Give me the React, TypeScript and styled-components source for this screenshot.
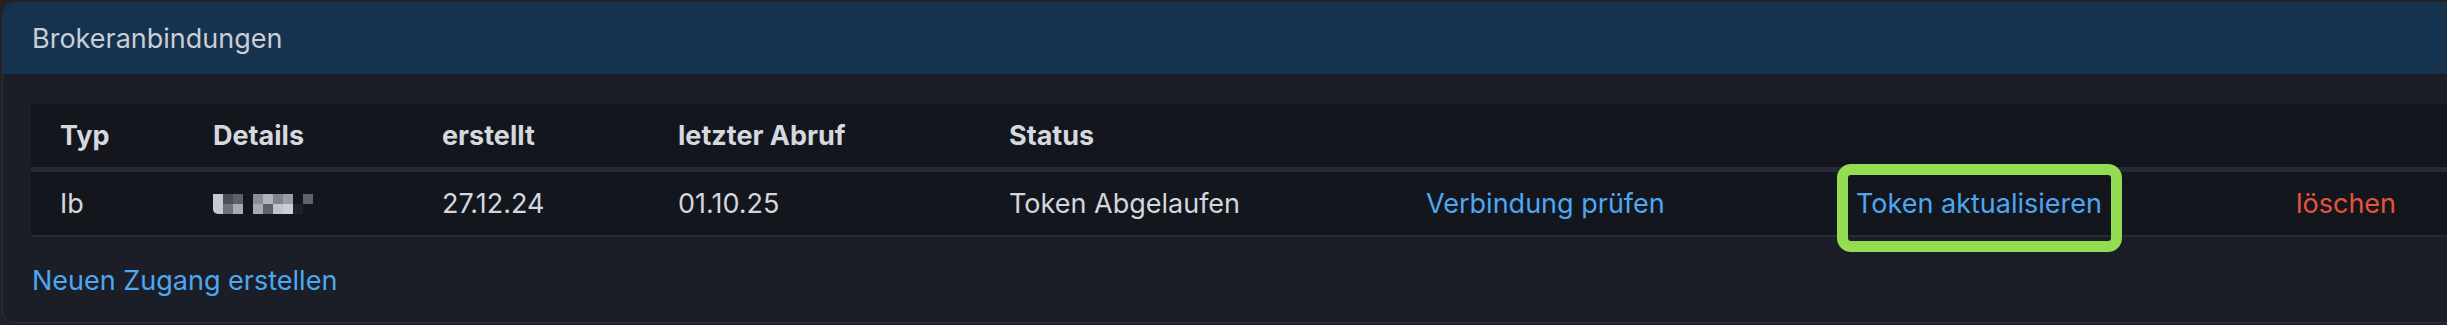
import React from 'react';
import styled, { createGlobalStyle } from 'styled-components';

const GlobalStyle = createGlobalStyle`
  html, body {
    margin: 0;
    padding: 0;
    background: #1f2229;
    overflow: hidden;
  }
  body {
    font-family: Inter, "Liberation Sans", sans-serif;
    -webkit-font-smoothing: antialiased;
  }
`;

const Page = styled.div`
  padding: 2px 0 0 2px;
  width: 2500px;
`;

const Panel = styled.section`
  background: #1b1e26;
  border: 1px solid #2b2f39;
  border-radius: 12px;
  overflow: hidden;
  height: 321px;
  box-sizing: border-box;
`;

const PanelHeader = styled.header`
  background: #15324f;
  height: 71px;
  display: flex;
  align-items: center;
  padding-left: 29px;
`;

const Title = styled.h2`
  margin: 0;
  font-size: 27px;
  font-weight: 400;
  color: #c9ced6;
`;

const PanelBody = styled.div`
  padding: 30px 0 0 28px;
`;

const Table = styled.table`
  width: 100%;
  border-collapse: separate;
  border-spacing: 0;
  table-layout: fixed;
`;

const Col = styled.col<{ $w?: number }>`
  width: ${(p) => (p.$w ? `${p.$w}px` : 'auto')};
`;

const Th = styled.th`
  height: 63px;
  box-sizing: content-box;
  background: #13161d;
  border-bottom: 5px solid #262a33;
  text-align: left;
  padding: 0 0 0 29px;
  font-size: 27px;
  font-weight: 700;
  color: #d5d8de;
`;

const Td = styled.td`
  position: relative;
  height: 63px;
  background: #13161d;
  border-bottom: 2px solid #262a33;
  padding: 0 0 0 29px;
  font-size: 27px;
  color: #d4d6dc;
  white-space: nowrap;
`;

const Link = styled.a<{ $danger?: boolean }>`
  color: ${(p) => (p.$danger ? '#e5533b' : '#4ea7f0')};
  text-decoration: none;
  cursor: pointer;
`;

const Highlight = styled.div`
  position: absolute;
  left: 10px;
  top: -8px;
  width: 285px;
  height: 88px;
  border: 11px solid #93dc53;
  border-radius: 14px;
  box-sizing: border-box;
  pointer-events: none;
`;

const Footer = styled.div`
  padding-top: 27px;
  padding-left: 1px;
  font-size: 27px;
`;

const blur: [number, number, number, string][] = [
  [10, 0, 10, '#4a4e58'], [20, 0, 10, '#5c6068'],
  [10, 10, 10, '#6e717a'], [20, 10, 10, '#a8abb2'],
  [40, 0, 10, '#8a8d95'], [50, 0, 10, '#b0b3ba'], [60, 0, 10, '#80838b'], [70, 0, 10, '#9a9da4'],
  [40, 10, 10, '#a6a9b0'], [50, 10, 10, '#5d6069'], [60, 10, 10, '#c0c3ca'], [70, 10, 10, '#ccced5'],
  [80, 10, 10, '#1e2129'], [90, 0, 10, '#5f626a'],
];

const Pixelated = () => (
  <svg width="100" height="20" viewBox="0 0 100 20" style={{ display: 'block' }}>
    <path d="M0 0 H10 V20 H5 A5 5 0 0 1 0 15 Z" fill="#c6c9d1" />
    {blur.map(([x, y, s, c], i) => (
      <rect key={i} x={x} y={y} width={s} height={s} fill={c} />
    ))}
  </svg>
);

const columns = [153, 229, 236, 331, 417, 430, 440];

export default function App() {
  return (
    <>
      <GlobalStyle />
      <Page>
        <Panel>
          <PanelHeader>
            <Title>Brokeranbindungen</Title>
          </PanelHeader>
          <PanelBody>
            <Table>
              <colgroup>
                {columns.map((w, i) => (
                  <Col key={i} $w={w} />
                ))}
                <Col />
              </colgroup>
              <thead>
                <tr>
                  <Th>Typ</Th>
                  <Th>Details</Th>
                  <Th>erstellt</Th>
                  <Th>letzter Abruf</Th>
                  <Th>Status</Th>
                  <Th />
                  <Th />
                  <Th />
                </tr>
              </thead>
              <tbody>
                <tr>
                  <Td>Ib</Td>
                  <Td><Pixelated /></Td>
                  <Td>27.12.24</Td>
                  <Td>01.10.25</Td>
                  <Td>Token Abgelaufen</Td>
                  <Td><Link>Verbindung prüfen</Link></Td>
                  <Td>
                    <Link>Token aktualisieren</Link>
                    <Highlight />
                  </Td>
                  <Td><Link $danger>löschen</Link></Td>
                </tr>
              </tbody>
            </Table>
            <Footer>
              <Link>Neuen Zugang erstellen</Link>
            </Footer>
          </PanelBody>
        </Panel>
      </Page>
    </>
  );
}
